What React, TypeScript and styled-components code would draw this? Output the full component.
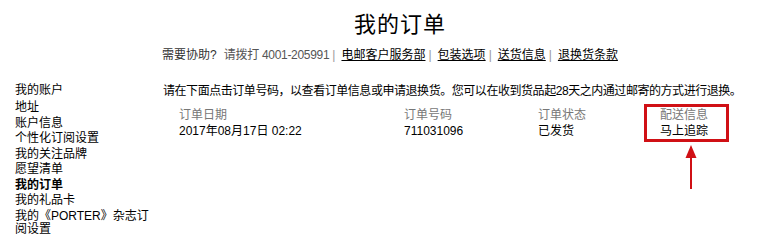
import React from "react";
import styled, { createGlobalStyle } from "styled-components";

const Global = createGlobalStyle`
  html, body { margin: 0; padding: 0; background: #fff; overflow: hidden; }
  body {
    font-family: "Liberation Sans", "Noto Sans CJK SC", sans-serif;
    font-size: 12px;
    color: #000;
  }
`;

const Page = styled.div`
  width: 777px;
  height: 238px;
  display: flex;
  flex-direction: column;
`;

const Header = styled.header`
  display: flex;
  flex-direction: column;
  align-items: center;
  padding-left: 23px;
`;

const Title = styled.h1`
  margin: 10px 0 0;
  font-size: 22px;
  line-height: 30px;
  font-weight: normal;
  letter-spacing: 1px;
`;

const HelpLine = styled.div`
  margin-top: 7px;
  margin-right: 20px;
  line-height: 16px;
  color: #333;
  display: flex;
  align-items: center;
  white-space: nowrap;
`;

const HelpLabel = styled.span`
  color: #333;
  margin-right: 7px;
`;

const Phone = styled.span`
  color: #555;
  letter-spacing: -0.3px;
`;

const Sep = styled.span`
  color: #999;
  margin: 0 6px 0 3px;
`;

const HelpLink = styled.a`
  color: #000;
  text-decoration: underline;
`;

const Main = styled.div`
  display: flex;
  margin-top: 21px;
`;

const Nav = styled.ul`
  list-style: none;
  margin: 0;
  padding: 0 0 0 15px;
  width: 148px;
  flex: none;
`;

const NavItem = styled.li<{ $active?: boolean; $first?: boolean }>`
  max-width: 134px;
  line-height: 13px;
  margin-bottom: ${(p) => (p.$first ? "4px" : "2.5px")};
  font-weight: ${(p) => (p.$active ? "bold" : "normal")};
  color: #000;
`;

const Content = styled.div`
  display: flex;
  flex-direction: column;
  margin-top: -1px;
`;

const Intro = styled.p`
  margin: 0;
  line-height: 16px;
  white-space: nowrap;
  letter-spacing: -0.45px;
`;

const Table = styled.div`
  display: flex;
  align-items: center;
  margin-top: 5px;
  padding-left: 16px;
`;

const Col = styled.div<{ $w: number }>`
  width: ${(p) => p.$w}px;
  display: flex;
  flex-direction: column;
  line-height: 16px;
`;

const HeadCell = styled.span`
  color: #777;
`;

const ValueCell = styled.span`
  color: #000;
`;

const Highlight = styled.div`
  position: relative;
  width: 85px;
  box-sizing: border-box;
  border: 3px solid #d01015;
  padding-left: 13px;
  display: flex;
  flex-direction: column;
  line-height: 16px;
`;

const Arrow = styled.svg`
  position: absolute;
  left: 38px;
  top: 38px;
`;

const navItems = [
  "地址",
  "账户信息",
  "个性化订阅设置",
  "我的关注品牌",
  "愿望清单",
];

export default function App() {
  return (
    <Page>
      <Global />
      <Header>
        <Title>我的订单</Title>
        <HelpLine>
          <HelpLabel>需要协助?</HelpLabel>
          <Phone>请拨打 4001-205991</Phone>
          <Sep>|</Sep>
          <HelpLink>电邮客户服务部</HelpLink>
          <Sep>|</Sep>
          <HelpLink>包装选项</HelpLink>
          <Sep>|</Sep>
          <HelpLink>送货信息</HelpLink>
          <Sep>|</Sep>
          <HelpLink>退换货条款</HelpLink>
        </HelpLine>
      </Header>
      <Main>
        <Nav>
          <NavItem $first>我的账户</NavItem>
          {navItems.map((t) => (
            <NavItem key={t}>{t}</NavItem>
          ))}
          <NavItem $active>我的订单</NavItem>
          <NavItem>我的礼品卡</NavItem>
          <NavItem>我的《PORTER》杂志订阅设置</NavItem>
        </Nav>
        <Content>
          <Intro>
            请在下面点击订单号码，以查看订单信息或申请退换货。您可以在收到货品起28天之内通过邮寄的方式进行退换。
          </Intro>
          <Table>
            <Col $w={225}>
              <HeadCell>订单日期</HeadCell>
              <ValueCell>2017年08月17日 02:22</ValueCell>
            </Col>
            <Col $w={134}>
              <HeadCell>订单号码</HeadCell>
              <ValueCell>711031096</ValueCell>
            </Col>
            <Col $w={106}>
              <HeadCell>订单状态</HeadCell>
              <ValueCell>已发货</ValueCell>
            </Col>
            <Highlight>
              <HeadCell>配送信息</HeadCell>
              <ValueCell>马上追踪</ValueCell>
              <Arrow width="12" height="44" viewBox="0 0 12 44">
                <polygon points="6,0 0.5,13 11.5,13" fill="#d01015" />
                <line x1="6" y1="10" x2="6" y2="44" stroke="#d01015" strokeWidth="2" />
              </Arrow>
            </Highlight>
          </Table>
        </Content>
      </Main>
    </Page>
  );
}
